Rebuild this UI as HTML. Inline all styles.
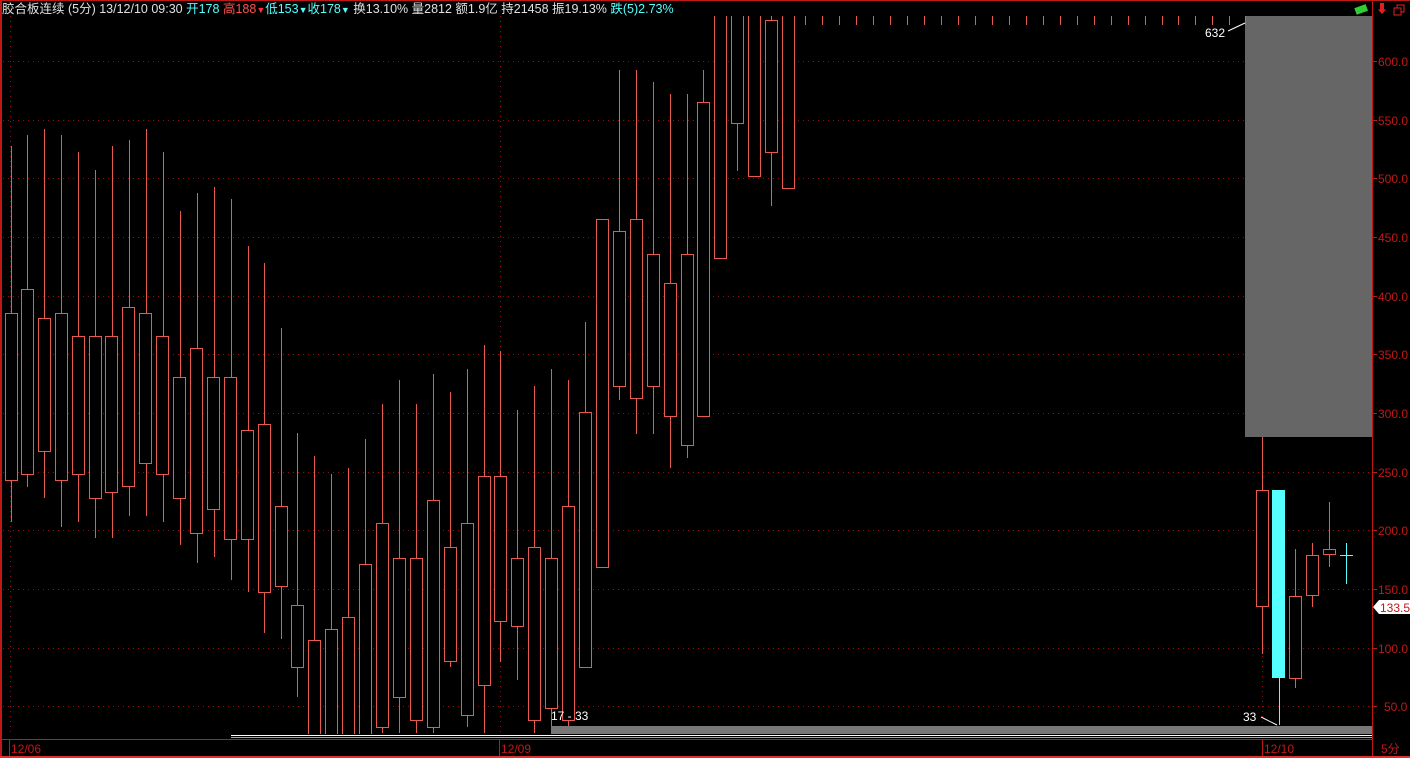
<!DOCTYPE html>
<html><head><meta charset="utf-8"><style>
html,body{margin:0;padding:0;background:#000;width:1410px;height:758px;overflow:hidden}
svg{display:block}
</style></head><body>
<svg width="1410" height="758" viewBox="0 0 1410 758" xmlns="http://www.w3.org/2000/svg" font-family="Liberation Sans, Noto Sans CJK SC, sans-serif">
<defs><clipPath id="c"><rect x="3" y="16" width="1369" height="718"/></clipPath></defs>
<rect width="1410" height="758" fill="#000"/>
<line x1="0" y1="0.5" x2="1410" y2="0.5" stroke="#c01818"/>
<line x1="1" y1="0" x2="1" y2="758" stroke="#c01818" stroke-width="2"/>
<line x1="1372.5" y1="0" x2="1372.5" y2="758" stroke="#c01818"/>
<line x1="0" y1="739.5" x2="1372" y2="739.5" stroke="#c01818"/>
<line x1="0" y1="757" x2="1410" y2="757" stroke="#e03030" stroke-width="2"/>
<text x="2" y="13" font-size="12.5" fill="#e0e0e0">胶合板连续 (5分) 13/12/10 09:30 <tspan fill="#5ff">开178</tspan> <tspan fill="#ff5050">高188</tspan><tspan fill="#ff3030" font-size="9">▼</tspan><tspan fill="#5ff">低153</tspan><tspan fill="#5ff" font-size="9">▼</tspan><tspan fill="#5ff">收178</tspan><tspan fill="#5ff" font-size="9">▼</tspan> 换13.10% 量2812 额1.9亿 持21458 振19.13% <tspan fill="#5ff">跌(5)2.73%</tspan></text>
<rect x="1355" y="6" width="12" height="7" fill="#3c3" transform="rotate(-20 1361 9)"/>
<text x="1376" y="13" font-size="12" fill="#e02020">⬇</text>
<rect x="1397" y="5" width="7" height="7" fill="none" stroke="#e02020"/>
<rect x="1394" y="8" width="7" height="7" fill="#000" stroke="#e02020"/>
<g stroke="#901010" stroke-dasharray="1,4">
<line x1="3" y1="61.5" x2="1372" y2="61.5"/><line x1="3" y1="120.5" x2="1372" y2="120.5"/><line x1="3" y1="178.5" x2="1372" y2="178.5"/><line x1="3" y1="237.5" x2="1372" y2="237.5"/><line x1="3" y1="296.5" x2="1372" y2="296.5"/><line x1="3" y1="354.5" x2="1372" y2="354.5"/><line x1="3" y1="413.5" x2="1372" y2="413.5"/><line x1="3" y1="472.5" x2="1372" y2="472.5"/><line x1="3" y1="530.5" x2="1372" y2="530.5"/><line x1="3" y1="589.5" x2="1372" y2="589.5"/><line x1="3" y1="648.5" x2="1372" y2="648.5"/><line x1="3" y1="706.5" x2="1372" y2="706.5"/>
<line x1="10.5" y1="16" x2="10.5" y2="733"/><line x1="500.5" y1="16" x2="500.5" y2="733"/><line x1="1262.5" y1="16" x2="1262.5" y2="733"/>
</g>
<g font-size="12" fill="#c01818">
<text x="1378" y="66">600.0</text><text x="1378" y="125">550.0</text><text x="1378" y="183">500.0</text><text x="1378" y="242">450.0</text><text x="1378" y="301">400.0</text><text x="1378" y="359">350.0</text><text x="1378" y="418">300.0</text><text x="1378" y="477">250.0</text><text x="1378" y="535">200.0</text><text x="1378" y="594">150.0</text><text x="1378" y="653">100.0</text><text x="1384" y="711">50.0</text>
<text x="11" y="753">12/06</text><text x="501" y="753">12/09</text><text x="1264" y="753">12/10</text><text x="1381" y="753">5分</text>
</g>
<g stroke="#c01818"><line x1="1372" y1="61.5" x2="1377" y2="61.5"/><line x1="1372" y1="120.5" x2="1377" y2="120.5"/><line x1="1372" y1="178.5" x2="1377" y2="178.5"/><line x1="1372" y1="237.5" x2="1377" y2="237.5"/><line x1="1372" y1="296.5" x2="1377" y2="296.5"/><line x1="1372" y1="354.5" x2="1377" y2="354.5"/><line x1="1372" y1="413.5" x2="1377" y2="413.5"/><line x1="1372" y1="472.5" x2="1377" y2="472.5"/><line x1="1372" y1="530.5" x2="1377" y2="530.5"/><line x1="1372" y1="589.5" x2="1377" y2="589.5"/><line x1="1372" y1="648.5" x2="1377" y2="648.5"/><line x1="1372" y1="706.5" x2="1377" y2="706.5"/>
<line x1="9.5" y1="740" x2="9.5" y2="756"/><line x1="499.5" y1="740" x2="499.5" y2="756"/><line x1="1262.5" y1="740" x2="1262.5" y2="756"/></g>
<path d="M1373 607 L1379 600 H1410 V614 H1379 Z" fill="#fff"/>
<text x="1380" y="612" font-size="12" fill="#c01818">133.5</text>
<rect x="1245" y="16" width="127" height="421" fill="#666"/>
<g clip-path="url(#c)">
<g stroke="#e85a50" stroke-width="1" fill="#000">
<path d="M11.5 146V522M27.5 135V487M44.5 129V498M61.5 135V527M78.5 152V522M95.5 170V538M112.5 146V538M129.5 140V516M146.5 129V516M163.5 152V522M180.5 211V545M197.5 193V563M214.5 187V557M231.5 199V580M248.5 246V592M264.5 263V633M281.5 328V639M297.5 433V697M314.5 456V733M331.5 474V733M348.5 468V733M365.5 439V733M382.5 404V733M399.5 380V733M416.5 404V733M433.5 374V733M450.5 392V667M467.5 369V727M484.5 345V733M500.5 351V662M517.5 410V680M534.5 386V733M551.5 369V733M568.5 380V733M585.5 322V667M602.5 219V567M619.5 70V400M636.5 70V434M653.5 82V434M670.5 94V468M687.5 94V458M703.5 70V416M720.5 16V258M737.5 16V171M754.5 16V176M771.5 16V206M788.5 16V188"/>
<rect x="5.5" y="313.5" width="12" height="167"/><rect x="21.5" y="289.5" width="12" height="185"/><rect x="38.5" y="318.5" width="12" height="133"/><rect x="55.5" y="313.5" width="12" height="167"/><rect x="72.5" y="336.5" width="12" height="138"/><rect x="89.5" y="336.5" width="12" height="162"/><rect x="105.5" y="336.5" width="12" height="156"/><rect x="122.5" y="307.5" width="12" height="179"/><rect x="139.5" y="313.5" width="12" height="150"/><rect x="156.5" y="336.5" width="12" height="138"/><rect x="173.5" y="377.5" width="12" height="121"/><rect x="190.5" y="348.5" width="12" height="185"/><rect x="207.5" y="377.5" width="12" height="132"/><rect x="224.5" y="377.5" width="12" height="162"/><rect x="241.5" y="430.5" width="12" height="109"/><rect x="258.5" y="424.5" width="12" height="168"/><rect x="275.5" y="506.5" width="12" height="80"/><rect x="291.5" y="605.5" width="12" height="62"/><rect x="308.5" y="640.5" width="12" height="110"/><rect x="325.5" y="629.5" width="12" height="120"/><rect x="342.5" y="617.5" width="12" height="130"/><rect x="359.5" y="564.5" width="12" height="180"/><rect x="376.5" y="523.5" width="12" height="204"/><rect x="393.5" y="558.5" width="12" height="139"/><rect x="410.5" y="558.5" width="12" height="162"/><rect x="427.5" y="500.5" width="12" height="227"/><rect x="444.5" y="547.5" width="12" height="114"/><rect x="461.5" y="523.5" width="12" height="192"/><rect x="478.5" y="476.5" width="12" height="209"/><rect x="494.5" y="476.5" width="12" height="145"/><rect x="511.5" y="558.5" width="12" height="68"/><rect x="528.5" y="547.5" width="12" height="173"/><rect x="545.5" y="558.5" width="12" height="150"/><rect x="562.5" y="506.5" width="12" height="214"/><rect x="579.5" y="412.5" width="12" height="255"/><rect x="596.5" y="219.5" width="12" height="348"/><rect x="613.5" y="231.5" width="12" height="155"/><rect x="630.5" y="219.5" width="12" height="179"/><rect x="647.5" y="254.5" width="12" height="132"/><rect x="664.5" y="283.5" width="12" height="133"/><rect x="681.5" y="254.5" width="12" height="191"/><rect x="697.5" y="102.5" width="12" height="314"/><rect x="714.5" y="10" width="12" height="248.5"/><rect x="731.5" y="10" width="12" height="113.5"/><rect x="748.5" y="10" width="12" height="166.5"/><rect x="765.5" y="20.5" width="12" height="132"/><rect x="782.5" y="10" width="12" height="178.5"/>
<path d="M805.5 16V25M822.5 16V25M839.5 16V25M856.5 16V25M873.5 16V25M890.5 16V25M907.5 16V25M924.5 16V25M941.5 16V25M958.5 16V25M975.5 16V25M992.5 16V25M1009.5 16V25M1026.5 16V25M1043.5 16V25M1060.5 16V25M1077.5 16V25M1094.5 16V25M1111.5 16V25M1128.5 16V25M1145.5 16V25M1162.5 16V25M1178.5 16V25M1195.5 16V25M1212.5 16V25M1229.5 16V25M1245.5 16V25"/>
<path d="M1262.5 437V654M1295.5 549V688M1312.5 543V607M1329.5 502V567"/>
<rect x="1256.5" y="490.5" width="12" height="116"/><rect x="1289.5" y="596.5" width="12" height="82"/><rect x="1306.5" y="555.5" width="12" height="40"/><rect x="1323.5" y="549.5" width="12" height="5"/>
</g>
</g>
<rect x="551" y="726" width="821" height="8" fill="#777"/>
<line x1="231" y1="735.5" x2="1372" y2="735.5" stroke="#fff"/>
<line x1="231" y1="737.5" x2="1372" y2="737.5" stroke="#9ab"/>
<text x="1205" y="37" font-size="12" fill="#fff">632</text>
<line x1="1228" y1="31" x2="1245" y2="23" stroke="#fff"/>
<text x="1243" y="721" font-size="12" fill="#fff">33</text>
<line x1="1261" y1="717" x2="1277" y2="725" stroke="#fff"/>
<text x="551" y="720" font-size="12" fill="#fff">17 - 33</text>
<line x1="1279.5" y1="678" x2="1279.5" y2="725" stroke="#5ff"/>
<rect x="1272" y="490" width="13" height="188" fill="#5ff"/>
<path d="M1340 555.5H1353M1346.5 543V584" stroke="#5ff"/>
</svg>
</body></html>
